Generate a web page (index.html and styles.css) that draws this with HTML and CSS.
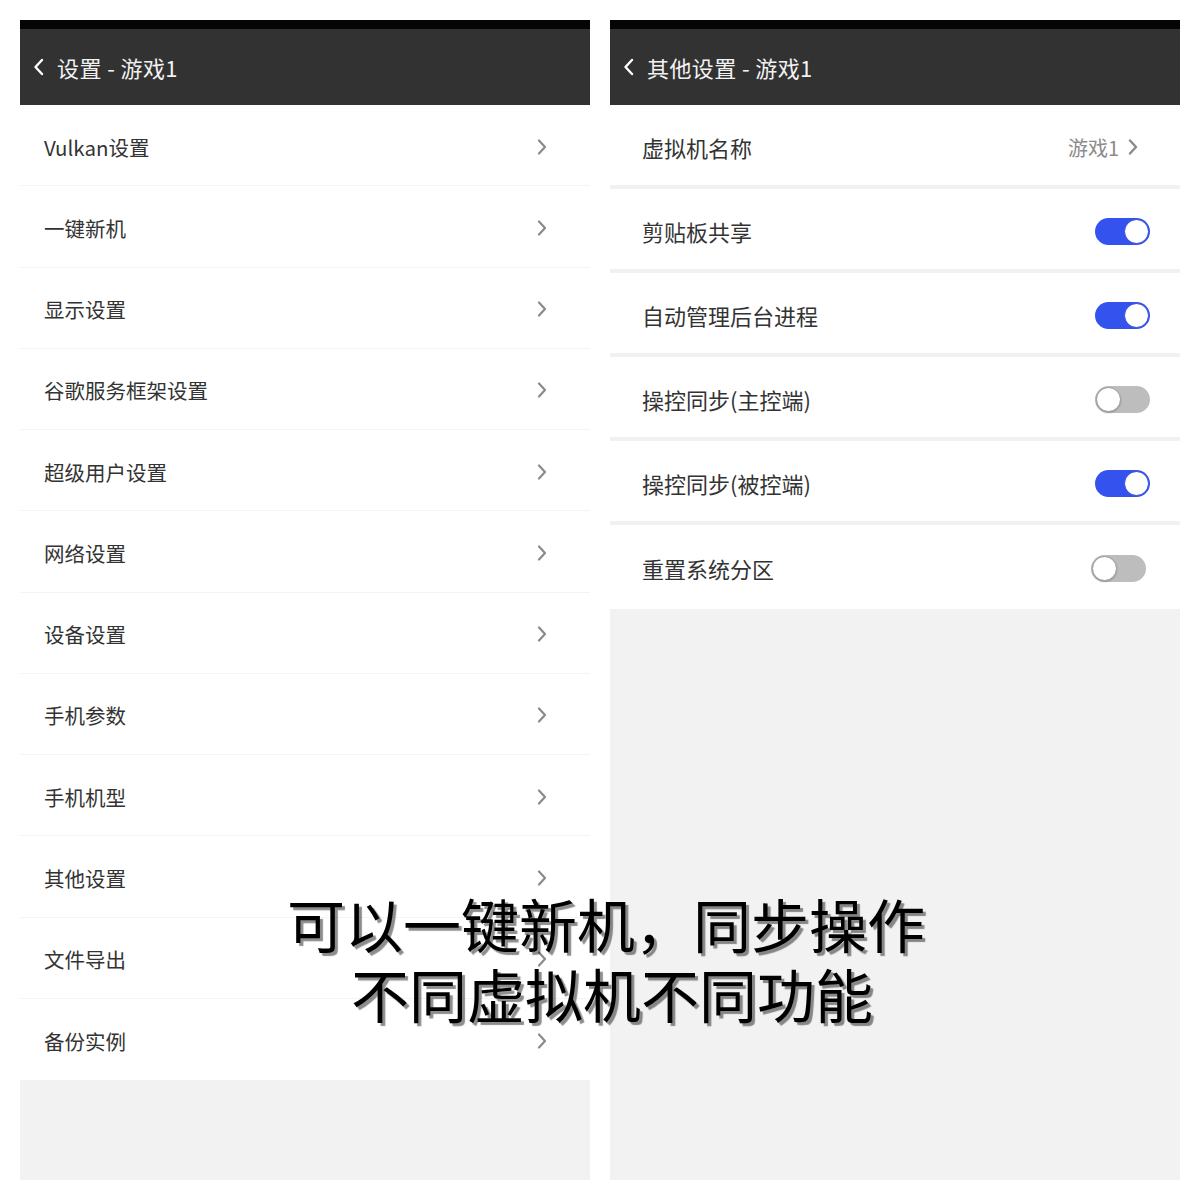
FILE: index.html
```html
<!DOCTYPE html>
<html lang="zh-CN">
<head>
<meta charset="utf-8">
<title>设置 - 游戏1</title>
<link rel="stylesheet" href="styles.css">
</head>
<body>
<div class="page">
  <section class="panel">
    <div class="statusbar"></div>
    <header class="appbar">
      <svg class="back" viewBox="0 0 12 18" width="12" height="18"><path d="M9 2 L2.5 9 L9 16" fill="none" stroke="#fff" stroke-width="2.4" stroke-linecap="round" stroke-linejoin="round"/></svg>
      <span class="title">设置 - 游戏1</span>
    </header>
    <ul class="menu">
      <li class="menu-row"><span>Vulkan设置</span><svg class="chev" viewBox="0 0 10 16" width="10" height="16"><path d="M2 1.5 L8 8 L2 14.5" fill="none" stroke="#8a8a8a" stroke-width="2.2" stroke-linecap="round" stroke-linejoin="round"/></svg></li>
      <li class="menu-row"><span>一键新机</span><svg class="chev" viewBox="0 0 10 16" width="10" height="16"><path d="M2 1.5 L8 8 L2 14.5" fill="none" stroke="#8a8a8a" stroke-width="2.2" stroke-linecap="round" stroke-linejoin="round"/></svg></li>
      <li class="menu-row"><span>显示设置</span><svg class="chev" viewBox="0 0 10 16" width="10" height="16"><path d="M2 1.5 L8 8 L2 14.5" fill="none" stroke="#8a8a8a" stroke-width="2.2" stroke-linecap="round" stroke-linejoin="round"/></svg></li>
      <li class="menu-row"><span>谷歌服务框架设置</span><svg class="chev" viewBox="0 0 10 16" width="10" height="16"><path d="M2 1.5 L8 8 L2 14.5" fill="none" stroke="#8a8a8a" stroke-width="2.2" stroke-linecap="round" stroke-linejoin="round"/></svg></li>
      <li class="menu-row"><span>超级用户设置</span><svg class="chev" viewBox="0 0 10 16" width="10" height="16"><path d="M2 1.5 L8 8 L2 14.5" fill="none" stroke="#8a8a8a" stroke-width="2.2" stroke-linecap="round" stroke-linejoin="round"/></svg></li>
      <li class="menu-row"><span>网络设置</span><svg class="chev" viewBox="0 0 10 16" width="10" height="16"><path d="M2 1.5 L8 8 L2 14.5" fill="none" stroke="#8a8a8a" stroke-width="2.2" stroke-linecap="round" stroke-linejoin="round"/></svg></li>
      <li class="menu-row"><span>设备设置</span><svg class="chev" viewBox="0 0 10 16" width="10" height="16"><path d="M2 1.5 L8 8 L2 14.5" fill="none" stroke="#8a8a8a" stroke-width="2.2" stroke-linecap="round" stroke-linejoin="round"/></svg></li>
      <li class="menu-row"><span>手机参数</span><svg class="chev" viewBox="0 0 10 16" width="10" height="16"><path d="M2 1.5 L8 8 L2 14.5" fill="none" stroke="#8a8a8a" stroke-width="2.2" stroke-linecap="round" stroke-linejoin="round"/></svg></li>
      <li class="menu-row"><span>手机机型</span><svg class="chev" viewBox="0 0 10 16" width="10" height="16"><path d="M2 1.5 L8 8 L2 14.5" fill="none" stroke="#8a8a8a" stroke-width="2.2" stroke-linecap="round" stroke-linejoin="round"/></svg></li>
      <li class="menu-row"><span>其他设置</span><svg class="chev" viewBox="0 0 10 16" width="10" height="16"><path d="M2 1.5 L8 8 L2 14.5" fill="none" stroke="#8a8a8a" stroke-width="2.2" stroke-linecap="round" stroke-linejoin="round"/></svg></li>
      <li class="menu-row"><span>文件导出</span><svg class="chev" viewBox="0 0 10 16" width="10" height="16"><path d="M2 1.5 L8 8 L2 14.5" fill="none" stroke="#8a8a8a" stroke-width="2.2" stroke-linecap="round" stroke-linejoin="round"/></svg></li>
      <li class="menu-row last"><span>备份实例</span><svg class="chev" viewBox="0 0 10 16" width="10" height="16"><path d="M2 1.5 L8 8 L2 14.5" fill="none" stroke="#8a8a8a" stroke-width="2.2" stroke-linecap="round" stroke-linejoin="round"/></svg></li>
    </ul>
    <div class="filler"></div>
  </section>

  <section class="panel">
    <div class="statusbar"></div>
    <header class="appbar">
      <svg class="back" viewBox="0 0 12 18" width="12" height="18"><path d="M9 2 L2.5 9 L9 16" fill="none" stroke="#fff" stroke-width="2.4" stroke-linecap="round" stroke-linejoin="round"/></svg>
      <span class="title">其他设置 - 游戏1</span>
    </header>
    <ul class="options">
      <li class="opt-row value-row"><span>虚拟机名称</span><span class="value">游戏1<svg class="chev small" viewBox="0 0 10 16" width="10" height="16"><path d="M2 1.5 L8 8 L2 14.5" fill="none" stroke="#8a8a8a" stroke-width="2.4" stroke-linecap="round" stroke-linejoin="round"/></svg></span></li>
      <li class="opt-row"><span>剪贴板共享</span><span class="switch on"><span class="knob"></span></span></li>
      <li class="opt-row"><span>自动管理后台进程</span><span class="switch on"><span class="knob"></span></span></li>
      <li class="opt-row"><span>操控同步(主控端)</span><span class="switch"><span class="knob"></span></span></li>
      <li class="opt-row"><span>操控同步(被控端)</span><span class="switch on"><span class="knob"></span></span></li>
      <li class="opt-row last shifted"><span>重置系统分区</span><span class="switch"><span class="knob"></span></span></li>
    </ul>
    <div class="filler"></div>
  </section>

  <div class="caption">
    <p>可以一键新机，同步操作</p>
    <p class="second">不同虚拟机不同功能</p>
  </div>
</div>
</body>
</html>
```

FILE: styles.css
```css
* { box-sizing: border-box; }

html, body {
  margin: 0;
  padding: 0;
  background: #ffffff;
}

body {
  font-family: "Noto Sans CJK SC", "Noto Sans", sans-serif;
  color: #333333;
}

.page {
  position: relative;
  width: 1200px;
  height: 1200px;
  padding: 20px;
  display: flex;
  gap: 20px;
}

.panel {
  width: 570px;
  height: 1160px;
  display: flex;
  flex-direction: column;
  background: #ffffff;
}

.statusbar {
  height: 9px;
  background: #050505;
  flex: none;
}

.appbar {
  height: 76px;
  flex: none;
  background: #323232;
  display: flex;
  align-items: center;
  padding-left: 13px;
  gap: 12px;
}

.back { display: block; flex: none; }

.title {
  color: #f2f2f2;
  font-size: 22px;
  line-height: 1;
  letter-spacing: 0.4px;
}

.menu, .options {
  list-style: none;
  margin: 0;
  padding: 0;
  flex: none;
}

.menu-row {
  height: 81.25px;
  display: flex;
  align-items: center;
  justify-content: space-between;
  padding: 3px 43px 0 24px;
  border-bottom: 1px solid #f4f4f4;
  font-size: 20.5px;
  color: #333333;
}

.menu-row.last { border-bottom: none; }

.chev { display: block; flex: none; }

.opt-row {
  height: 84px;
  display: flex;
  align-items: center;
  justify-content: space-between;
  padding: 4px 30px 0 32px;
  border-bottom: 4px solid #f1f1f1;
  font-size: 22px;
  color: #333333;
}

.opt-row.last { border-bottom: none; padding-top: 2px; }

.value-row { padding-right: 42px; }

.value {
  display: flex;
  align-items: center;
  gap: 9px;
  color: #8c8c8c;
  font-size: 20px;
}

.switch {
  position: relative;
  width: 55px;
  height: 27px;
  border-radius: 14px;
  background: #bdbdbd;
  flex: none;
}

.switch.on { background: #3453ee; }

.switch .knob {
  position: absolute;
  top: 1px;
  left: 1px;
  width: 25px;
  height: 25px;
  border-radius: 50%;
  background: #ffffff;
  border: 1.5px solid #9a9a9a;
  box-shadow: 0 1px 2px rgba(0, 0, 0, 0.2);
}

.switch.on .knob {
  left: 29px;
  border-color: #2e49d8;
  box-shadow: none;
}

.shifted { padding-right: 34px; }

.filler {
  flex: 1;
  background: #f2f2f2;
}

.caption {
  position: absolute;
  left: 0;
  right: 0;
  top: 888px;
  text-align: center;
  padding-left: 12px;
}

.caption p {
  margin: 0;
  font-size: 58px;
  line-height: 70px;
  font-weight: 400;
  color: #000000;
  text-shadow: 3px 3px 1px rgba(0, 0, 0, 0.45);
}

.caption .second { padding-left: 12px; }
```
